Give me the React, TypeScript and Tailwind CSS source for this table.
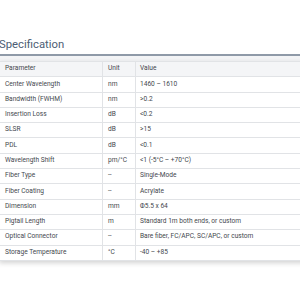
import React from "react";

const rows: [string, string, string][] = [
  ["Center Wavelength", "nm", "1460 – 1610"],
  ["Bandwidth (FWHM)", "nm", ">0.2"],
  ["Insertion Loss", "dB", "<0.2"],
  ["SLSR", "dB", ">15"],
  ["PDL", "dB", "<0.1"],
  ["Wavelength Shift", "pm/°C", "<1 (-5°C – +70°C)"],
  ["Fiber Type", "--", "Single-Mode"],
  ["Fiber Coating", "--", "Acrylate"],
  ["Dimension", "mm", "Φ5.5 x 64"],
  ["Pigtail Length", "m", "Standard 1m both ends, or custom"],
  ["Optical Connector", "--", "Bare fiber, FC/APC, SC/APC, or custom"],
  ["Storage Temperature", "°C", "-40 – +85"],
];

export default function App() {
  return (
    <div
      className="w-[300px] h-[300px] bg-white overflow-hidden"
      style={{ fontFamily: "Roboto, 'Liberation Sans', sans-serif" }}
    >
      <div className="pt-[37px] -ml-[1px] w-[320px]">
        <div className="text-[11.3px] leading-[16px] text-[#4c5d74] h-[17px]">Specification</div>
        <div className="h-[2px] bg-[#8f9aa8]" />
        <div className="h-[5px] bg-[#f3f4f6]" />
        <table className="w-full border-collapse text-[6.6px] text-[#44484e] shadow-[0_2px_5px_rgba(0,0,0,0.18)]">
          <thead>
            <tr className="bg-[#f4f5f7] h-[15.3px]">
              <td className="w-[103px] pl-[5px] border border-[#e1e3e6]">Parameter</td>
              <td className="w-[33px] pl-[5px] border border-[#e1e3e6]">Unit</td>
              <td className="pl-[4px] border border-[#e1e3e6]">Value</td>
            </tr>
          </thead>
          <tbody>
            {rows.map((r) => (
              <tr key={r[0]} className="h-[15.3px] bg-white">
                <td className="pl-[5px] border border-[#e1e3e6]">{r[0]}</td>
                <td className="pl-[5px] border border-[#e1e3e6]">{r[1]}</td>
                <td className="pl-[4px] border border-[#e1e3e6]">{r[2]}</td>
              </tr>
            ))}
          </tbody>
        </table>
      </div>
    </div>
  );
}
